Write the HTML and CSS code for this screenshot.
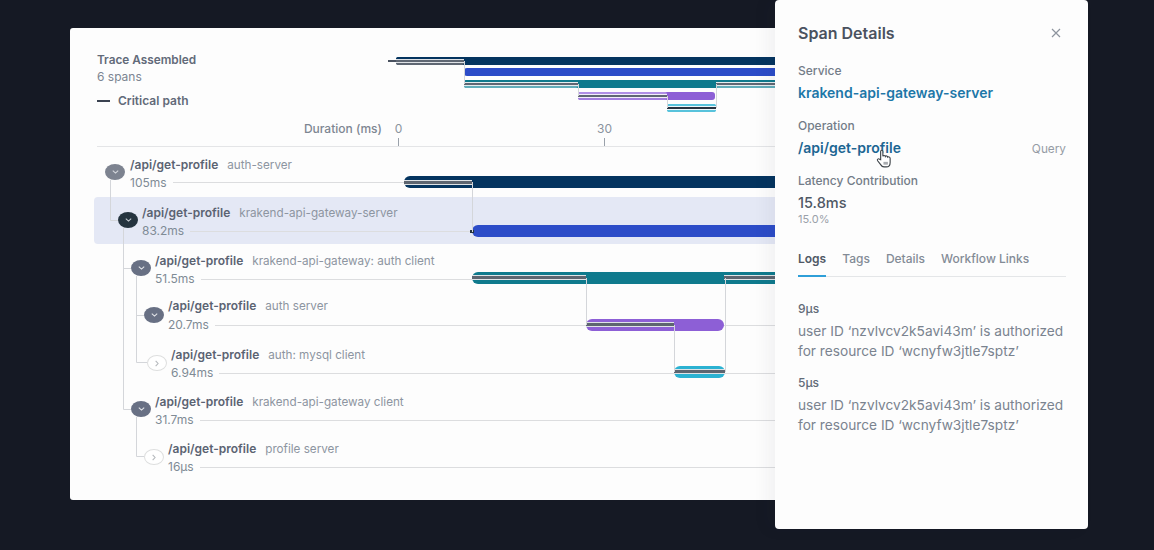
FILE: index.html
```html
<!DOCTYPE html>
<html lang="en">
<head>
<meta charset="utf-8">
<title>Trace view</title>
<link rel="stylesheet" href="styles.css">
</head>
<body>
<main class="stage">
  <section class="card">
    <header class="head">
      <div class="summary">
        <div class="trace-title">Trace Assembled</div>
        <div class="trace-count">6 spans</div>
        <div class="legend"><span class="legend-dash"></span>Critical path</div>
      </div>
      <div class="minimap">
        <div class="mini m1 navy" style="left:8px;width:500px"></div>
        <div class="mini m2 blue" style="left:76px;width:430px"></div>
        <div class="mini m3 teal" style="left:76px;width:430px"></div>
        <div class="mini m4 purple" style="left:190px;width:137px"></div>
        <div class="mini m5 cyan" style="left:279px;width:49px"></div>
        <div class="mlead" style="left:0;width:8px"></div>
        <div class="mcrit m1 cn" style="left:8px;width:68px"></div>
        <div class="mcrit m3 ct" style="left:76px;width:114px"></div>
        <div class="mcrit m3 ct" style="left:328px;width:100px"></div>
        <div class="mcrit m4 cp" style="left:190px;width:89px"></div>
        <div class="mcrit m5 cc" style="left:279px;width:49px"></div>
      </div>
    </header>

    <div class="axis">
      <div class="axis-label">Duration (ms)</div>
      <div class="ticks">
        <div class="tick" style="left:0">0</div>
        <div class="tick" style="left:206px">30</div>
      </div>
    </div>

    <div class="rows">
      <div class="row h48 d0">
        <span class="toggle mid"><svg viewBox="0 0 10 6"><path d="M2 1.5 5 4.2 8 1.5"/></svg></span>
        <div class="info">
          <div class="name"><b>/api/get-profile</b><span>auth-server</span></div>
          <div class="dur"><span>105ms</span><i></i></div>
        </div>
        <div class="bar navy" style="left:310px;width:500px"></div>
        <div class="crit" style="left:310px;width:68px"></div>
      </div>
      <div class="row h47 d1 selected">
        <span class="toggle dark"><svg viewBox="0 0 10 6"><path d="M2 1.5 5 4.2 8 1.5"/></svg></span>
        <div class="info">
          <div class="name"><b>/api/get-profile</b><span>krakend-api-gateway-server</span></div>
          <div class="dur"><span>83.2ms</span><i></i></div>
        </div>
        <div class="bar blue" style="left:378px;width:430px"></div>
        <div class="crit stub" style="left:376px;width:4px"></div>
      </div>
      <div class="row h45 d2 tight">
        <span class="toggle slate"><svg viewBox="0 0 10 6"><path d="M2 1.5 5 4.2 8 1.5"/></svg></span>
        <div class="info">
          <div class="name"><b>/api/get-profile</b><span>krakend-api-gateway: auth client</span></div>
          <div class="dur"><span>51.5ms</span><i></i></div>
        </div>
        <div class="bar teal" style="left:378px;width:430px"></div>
        <div class="crit" style="left:378px;width:114px"></div>
        <div class="crit" style="left:630px;width:100px"></div>
      </div>
      <div class="row h49 d3 low">
        <span class="toggle slate"><svg viewBox="0 0 10 6"><path d="M2 1.5 5 4.2 8 1.5"/></svg></span>
        <div class="info">
          <div class="name"><b>/api/get-profile</b><span>auth server</span></div>
          <div class="dur"><span>20.7ms</span><i></i></div>
        </div>
        <div class="bar purple" style="left:492px;width:138px"></div>
        <div class="crit" style="left:492px;width:88px"></div>
      </div>
      <div class="row h47 d4 tight">
        <span class="toggle open"><svg viewBox="0 0 6 10"><path d="M1.5 2 4.2 5 1.5 8"/></svg></span>
        <div class="info">
          <div class="name"><b>/api/get-profile</b><span>auth: mysql client</span></div>
          <div class="dur"><span>6.94ms</span><i></i></div>
        </div>
        <div class="bar cyan" style="left:580px;width:51px"></div>
        <div class="crit" style="left:580px;width:51px"></div>
      </div>
      <div class="row h47 d2 tight">
        <span class="toggle slate"><svg viewBox="0 0 10 6"><path d="M2 1.5 5 4.2 8 1.5"/></svg></span>
        <div class="info">
          <div class="name"><b>/api/get-profile</b><span>krakend-api-gateway client</span></div>
          <div class="dur"><span>31.7ms</span><i></i></div>
        </div>
      </div>
      <div class="row h47 d3 tight">
        <span class="toggle open"><svg viewBox="0 0 6 10"><path d="M1.5 2 4.2 5 1.5 8"/></svg></span>
        <div class="info">
          <div class="name"><b>/api/get-profile</b><span>profile server</span></div>
          <div class="dur"><span>16µs</span><i></i></div>
        </div>
      </div>
    </div>

    <svg class="links" viewBox="70 28 760 472">
      <path d="M110.500 180V220.500H118"/>
      <path d="M123.500 228V409.500H131M123.500 268.500H131"/>
      <path d="M136.500 276V362.500H147M136.500 315.500H144"/>
      <path d="M136.500 417V456.500H144"/>
      <path d="M472.500 182V232M586.500 278V325M674.500 325V372M725.500 278V372"/>
      <path d="M464.500 61V84M578.500 84V96M667.500 96V108M716.500 84V108"/>
    </svg>
  </section>

  <aside class="panel">
    <div class="panel-head">
      <h2>Span Details</h2>
      <svg class="close" viewBox="0 0 10 10"><path d="M1 1 9 9M9 1 1 9"/></svg>
    </div>
    <div class="label first">Service</div>
    <div class="link service">krakend-api-gateway-server</div>
    <div class="label">Operation</div>
    <div class="op-line">
      <span class="link operation">/api/get-profile</span>
      <span class="query">Query</span>
    </div>
    <div class="label">Latency Contribution</div>
    <div class="latency">15.8ms</div>
    <div class="percent">15.0%</div>
    <nav class="tabs">
      <span class="tab active">Logs</span>
      <span class="tab">Tags</span>
      <span class="tab">Details</span>
      <span class="tab">Workflow Links</span>
    </nav>
    <div class="log first-log">
      <div class="log-time">9µs</div>
      <p>user ID ‘nzvlvcv2k5avi43m’ is authorized for resource ID ‘wcnyfw3jtle7sptz’</p>
    </div>
    <div class="log">
      <div class="log-time">5µs</div>
      <p>user ID ‘nzvlvcv2k5avi43m’ is authorized for resource ID ‘wcnyfw3jtle7sptz’</p>
    </div>
    <svg class="cursor" viewBox="0 0 14 17">
      <path d="M4 9.500V2.200C4 .8 6 .8 6 2.200V6.500C6.400 5.500 8 5.600 8.200 6.700 8.700 5.900 10.200 6.100 10.300 7.200 10.900 6.700 12.500 7 12.500 8.400V12C12.500 14.500 11 16 9 16H7C5.500 16 4.700 15.200 4 14L1.300 10.500C.5 9.300 2 8.200 3 9.100Z"/>
      <path class="cursor-in" d="M6.500 11.500H10.500V14H6.500Z"/>
    </svg>
  </aside>
</main>
</body>
</html>
```
FILE: styles.css
```css
* { box-sizing: border-box; }

html, body {
  margin: 0;
  height: 100%;
}

body {
  background: #151924;
  font-family: Inter, "Liberation Sans", sans-serif;
  overflow: hidden;
}

.stage {
  position: relative;
  width: 1154px;
  height: 550px;
  padding: 28px 0 0 70px;
}

/* Main card */
.card {
  position: relative;
  width: 760px;
  height: 472px;
  padding: 23px 0 0 27px;
  background: #fdfdfd;
  border-radius: 3px;
  overflow: hidden;
}

.head {
  display: flex;
  height: 69px;
}

.summary {
  width: 291px;
  flex: none;
}

.trace-title {
  font-size: 11.800px;
  line-height: 18px;
  font-weight: 600;
  color: #626a79;
}

.trace-count {
  font-size: 12px;
  line-height: 16px;
  color: #7c8592;
}

.legend {
  display: flex;
  align-items: center;
  gap: 8px;
  margin-top: 7px;
  font-size: 12px;
  line-height: 18px;
  font-weight: 600;
  color: #626a79;
}

.legend-dash {
  width: 13px;
  height: 2px;
  background: #3a4250;
}

.minimap {
  position: relative;
  flex: 1;
  margin-top: 6px;
  height: 56px;
}

.mini {
  position: absolute;
  height: 8px;
  border-radius: 3px;
}

.m1 { top: 0; }
.m2 { top: 11px; }
.m3 { top: 23px; }
.m4 { top: 35px; }
.m5 { top: 47px; }

.mlead {
  position: absolute;
  top: 3px;
  height: 2px;
  background: #4a5260;
}

.mcrit {
  position: absolute;
  height: 8px;
  border-radius: 2px;
}

.cn { background: linear-gradient(#04345f 0 2px, #dfe2e6 2px 3px, #5f6773 3px 5px, #dfe2e6 5px 6px, #5f6773 6px 8px); }
.ct { background: linear-gradient(#0f7a8d 0 2px, #e6ecee 2px 3px, #5f6773 3px 5px, #e6ecee 5px 6px, #62adba 6px 8px); }
.cp { background: linear-gradient(#b08fe6 0 2px, #f2eefa 2px 3px, #5f6773 3px 5px, #f2eefa 5px 6px, #a27ddf 6px 8px); }
.cc { background: linear-gradient(#58c3dc 0 2px, #eef8fb 2px 3px, #283240 3px 5px, #eef8fb 5px 6px, #58c3dc 6px 8px); }

.navy { background: #04345f; }
.blue { background: #2c4cc8; }
.teal { background: #0f7a8d; }
.purple { background: #8d5fd6; }
.cyan { background: #2bb2d2; }

/* Axis */
.axis {
  display: flex;
  height: 27px;
  border-bottom: 1px solid #e4e5e7;
}

.axis-label {
  width: 285px;
  flex: none;
  text-align: right;
  font-size: 12px;
  line-height: 18px;
  font-weight: 500;
  color: #7d8692;
}

.ticks {
  position: relative;
  flex: 1;
  margin-left: 16px;
}

.tick {
  position: absolute;
  top: 0;
  height: 26px;
  width: 1px;
  font-size: 12px;
  line-height: 18px;
  color: #8b939e;
  display: flex;
  justify-content: center;
  white-space: nowrap;
}

.tick::after {
  content: "";
  position: absolute;
  left: 0;
  bottom: 0;
  width: 1px;
  height: 8px;
  background: #9aa1aa;
}

/* Rows */
.rows {
  margin: 3px 0 0 -3px;
}

.row {
  position: relative;
  display: flex;
  padding-top: 6px;
  gap: 4px;
}

.h45 { height: 45px; }
.h47 { height: 47px; }
.h48 { height: 48px; }
.h49 { height: 49px; }

.d0 { padding-left: 11px; gap: 5px; }
.d1 { padding-left: 24px; }
.d2 { padding-left: 37px; }
.d3 { padding-left: 50px; }
.d4 { padding-left: 53px; }

.selected {
  margin: -1px 0 2px;
  padding-top: 7px;
  background: #e4e8f5;
  border-radius: 4px 0 0 4px;
}

.toggle {
  flex: none;
  display: flex;
  align-items: center;
  justify-content: center;
  width: 20px;
  height: 16px;
  margin-top: 8px;
  border-radius: 50%;
  color: #fff;
}

.low .toggle { margin-top: 10px; }

.toggle svg {
  width: 9px;
  height: 6px;
  fill: none;
  stroke: currentColor;
  stroke-width: 1.2;
}

.toggle.mid { background: #7d8390; color: #d6d9de; }
.toggle.dark { background: #25343f; color: #c5ccd2; }
.toggle.slate { background: #687084; color: #e4e6ea; }

.toggle.open {
  margin-top: 9px;
  background: #fff;
  border: 1px solid #dedfdf;
  color: #b5b8bc;
}

.toggle.open svg {
  width: 6px;
  height: 9px;
}

.info {
  flex: 1;
  min-width: 0;
}

.name {
  display: flex;
  align-items: baseline;
  gap: 9px;
  font-size: 12px;
  line-height: 18px;
  white-space: nowrap;
}

.name b {
  font-weight: 600;
  color: #5b6372;
}

.name span {
  font-size: 11.700px;
  color: #8d95a1;
}

.tight .name { line-height: 17px; }

.dur {
  display: flex;
  align-items: center;
  gap: 6px;
  font-size: 12px;
  line-height: 18px;
  color: #7f8b95;
}

.low .dur { margin-top: 1px; }

.dur i {
  flex: 1;
  height: 1px;
  background: #dcdddf;
}

.d0 .dur i { margin-bottom: 2px; }

.bar {
  position: absolute;
  top: 26px;
  height: 12px;
  border-radius: 6px 0 0 6px;
}

.low .bar { top: 28px; }
.selected .bar { top: 28px; }

.bar.purple,
.bar.cyan {
  border-radius: 6px;
}

.crit {
  position: absolute;
  top: 30px;
  height: 5px;
  background: #5d6570;
  border-top: 1px solid #dfe3e6;
  border-bottom: 1px solid #dfe3e6;
}

.tight .crit { top: 29px; }
.low .crit { top: 31px; }

.crit.stub {
  top: 33px;
  height: 3px;
  background: #25343f;
  border: 0;
}

.links {
  position: absolute;
  inset: 0;
  width: 760px;
  height: 472px;
  fill: none;
  stroke: #d4d6da;
  stroke-width: 1;
  pointer-events: none;
}

/* Panel */
.panel {
  position: absolute;
  left: 775px;
  top: 0;
  width: 313px;
  height: 529px;
  padding: 23px 22px 0 23px;
  background: #fdfdfd;
  border-radius: 4px;
  box-shadow: -8px 0 16px rgba(30, 40, 60, .05);
}

.panel-head {
  display: flex;
  justify-content: space-between;
  align-items: center;
  height: 20px;
}

.panel-head h2 {
  margin: 0;
  font-size: 16px;
  line-height: 20px;
  font-weight: 600;
  color: #4a525f;
}

.close {
  width: 10px;
  height: 10px;
  margin-right: 5px;
  fill: none;
  stroke: #8d949e;
  stroke-width: 1.2;
}

.label {
  margin-top: 15px;
  font-size: 12px;
  line-height: 16px;
  font-weight: 500;
  color: #737c88;
}

.label.first { margin-top: 20px; }

.link {
  display: block;
  margin-top: 4px;
  font-size: 14px;
  line-height: 20px;
  font-weight: 600;
}

.service { color: #1d77a8; }

.op-line {
  display: flex;
  justify-content: space-between;
  align-items: center;
}

.operation { color: #1c6693; }

.query {
  margin-top: 5px;
  font-size: 11.800px;
  line-height: 18px;
  color: #959ca5;
}

.latency {
  margin-top: 4px;
  font-size: 14.500px;
  line-height: 20px;
  font-weight: 500;
  color: #4f5865;
}

.percent {
  margin-top: -1px;
  font-size: 11px;
  line-height: 14px;
  color: #9aa1a9;
}

.tabs {
  display: flex;
  gap: 16px;
  margin-top: 24px;
  border-bottom: 1px solid #e4e6e8;
}

.tab {
  position: relative;
  padding-bottom: 8px;
  font-size: 12px;
  line-height: 18px;
  font-weight: 500;
  color: #838b96;
}

.tab.active {
  font-weight: 600;
  color: #4f5865;
}

.tab.active::after {
  content: "";
  position: absolute;
  left: 0;
  right: 0;
  bottom: -1px;
  height: 2px;
  background: #2f9fd8;
}

.log { margin-top: 14px; }

.log.first-log { margin-top: 24px; }

.log-time {
  font-size: 12px;
  line-height: 16px;
  font-weight: 500;
  color: #626b78;
}

.log p {
  margin: 4px 0 0;
  font-size: 13.700px;
  line-height: 20px;
  color: #7a838f;
}

.cursor {
  position: absolute;
  left: 101px;
  top: 149px;
  width: 16px;
  height: 19px;
  fill: #fff;
  stroke: #3d4348;
  stroke-width: 1;
}

.cursor-in {
  fill: #a8abaf;
  stroke: none;
}
```
